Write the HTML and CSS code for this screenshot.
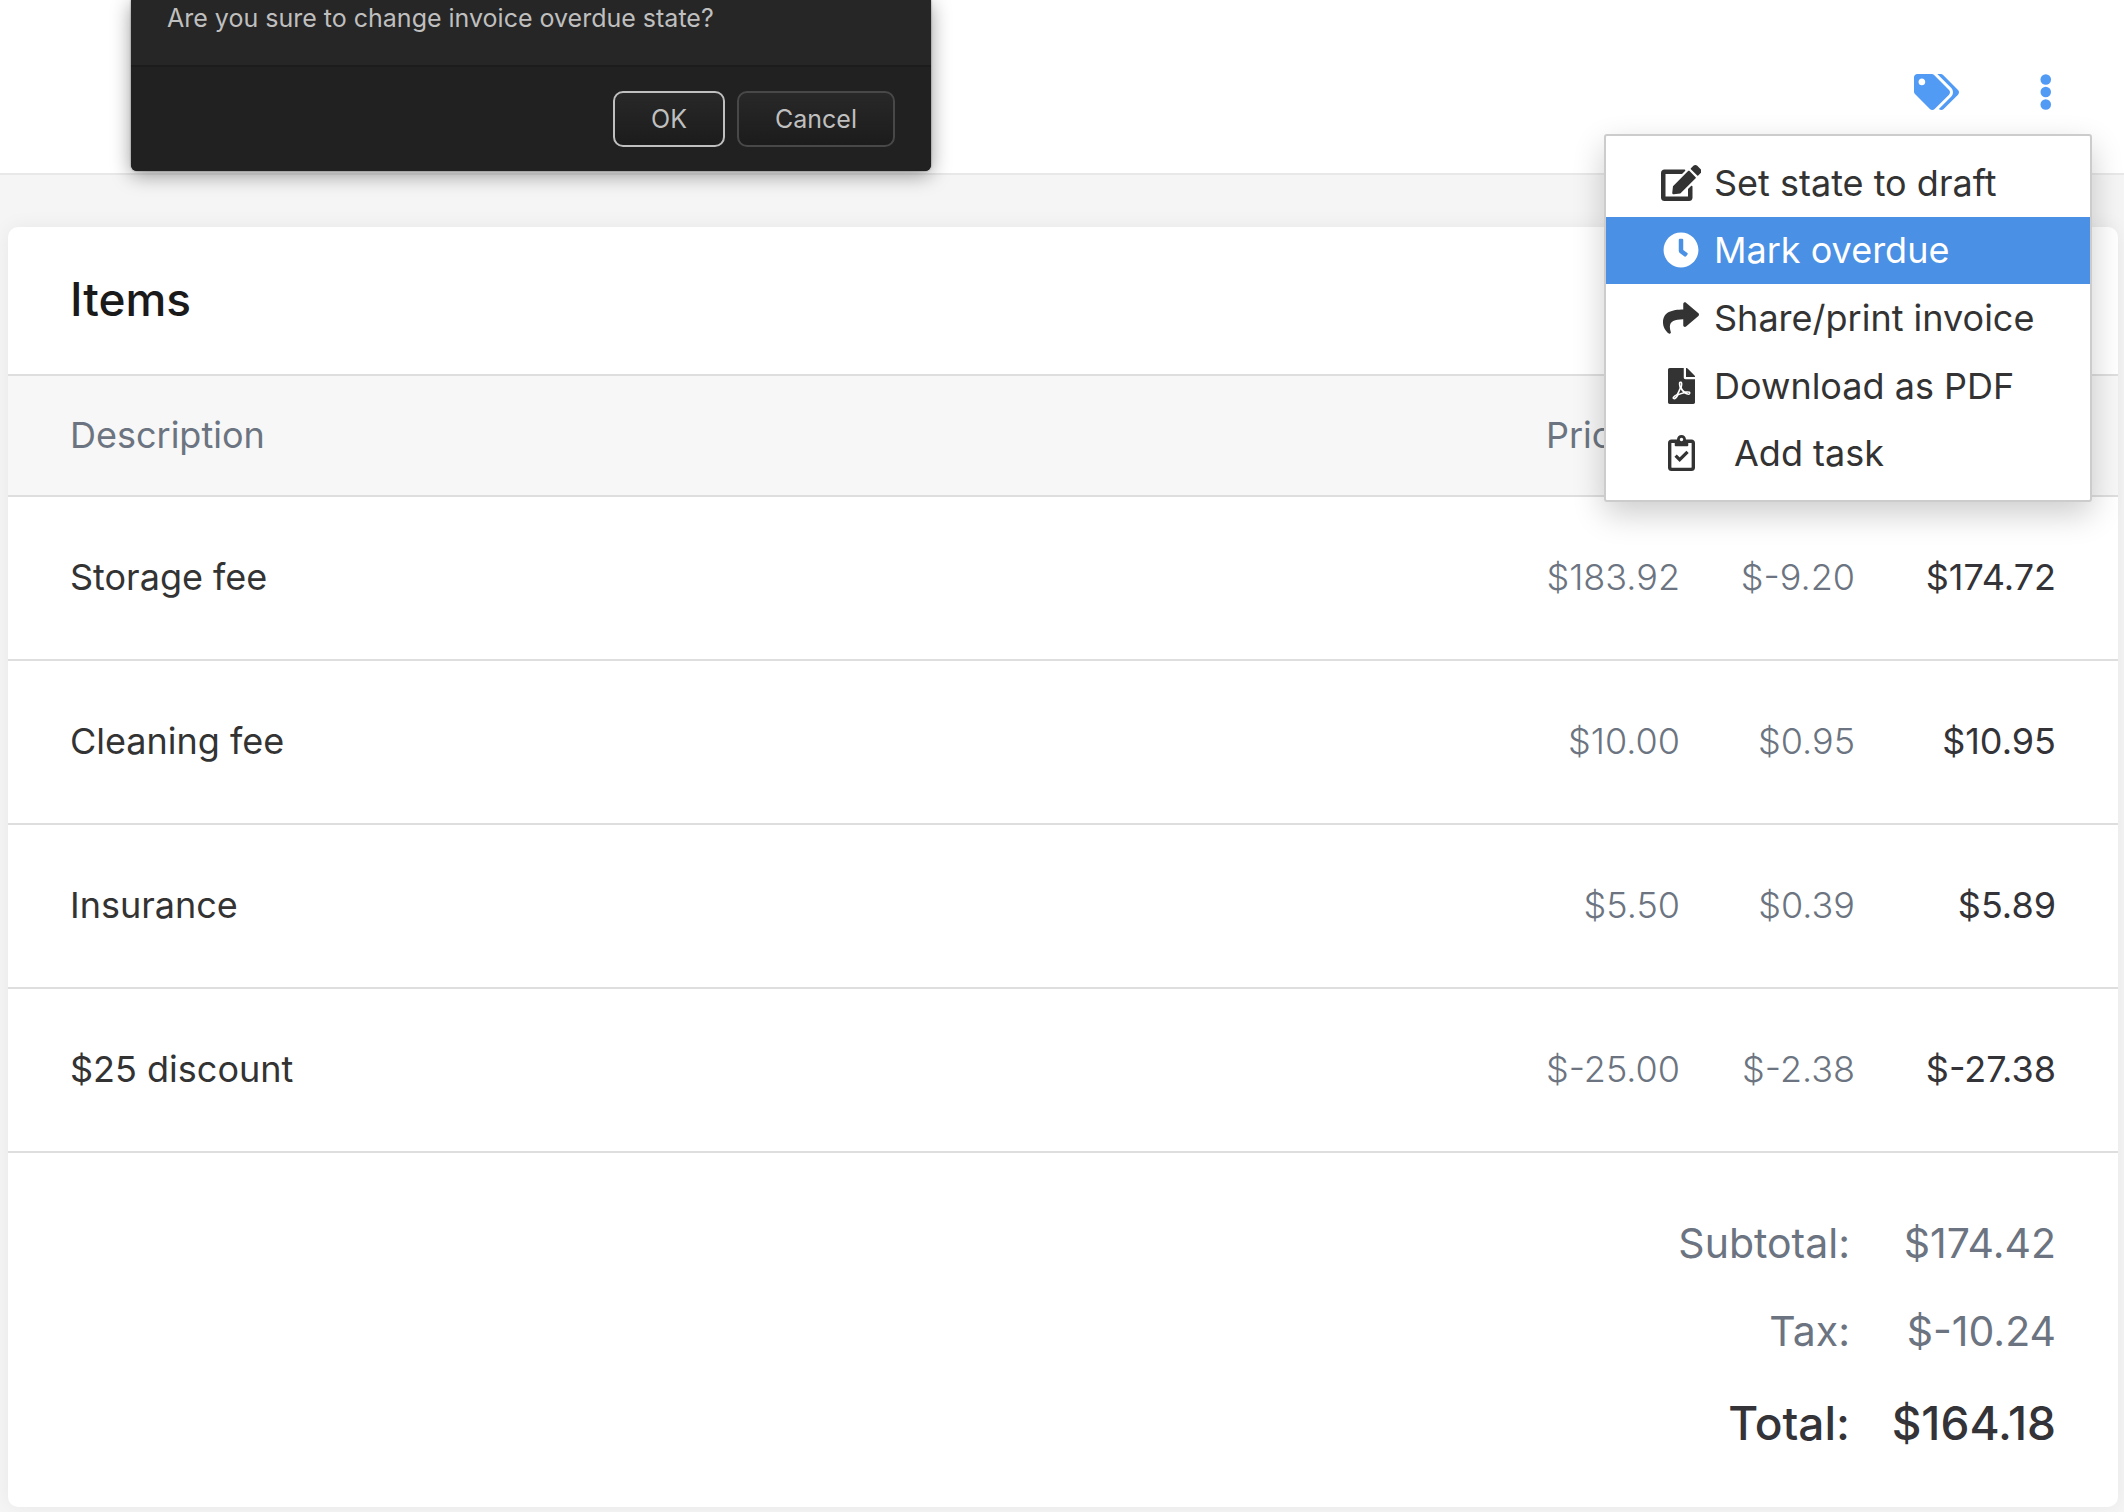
FILE: index.html
```html
<!DOCTYPE html>
<html lang="en">
<head>
  <meta charset="UTF-8">
  <title>Invoice</title>
  <link rel="stylesheet" href="styles.css">
</head>
<body>

<header class="topbar">
  <button class="icon-btn" type="button" aria-label="Tags">
    <svg class="icon" viewBox="0 0 640 512"><path d="M497.941 225.941L286.059 14.059A48 48 0 0 0 252.118 0H48C21.49 0 0 21.49 0 48v204.118a48 48 0 0 0 14.059 33.941l211.882 211.882c18.744 18.745 49.136 18.746 67.882 0l204.118-204.118c18.745-18.745 18.745-49.137 0-67.882zM112 160c-26.51 0-48-21.49-48-48s21.49-48 48-48 48 21.49 48 48-21.49 48-48 48zm513.941 133.823L421.823 497.941c-18.745 18.745-49.137 18.745-67.882 0l-.36-.36L527.64 323.522c16.999-16.999 26.36-39.6 26.36-63.64s-9.362-46.641-26.36-63.64L331.397 0h48.721a48 48 0 0 1 33.941 14.059l211.882 211.882c18.745 18.745 18.745 49.137 0 67.882z"/></svg>
  </button>
  <div class="dropdown">
    <button class="icon-btn" type="button" aria-label="More actions">
      <svg class="icon" viewBox="0 0 192 512"><circle cx="96" cy="78" r="75"/><circle cx="96" cy="256" r="75"/><circle cx="96" cy="434" r="75"/></svg>
    </button>
    <ul class="menu">
      <li><a href="#draft">
        <span class="menu-icon"><svg class="icon" viewBox="0 0 576 512"><path d="M402.6 83.2l90.2 90.2c3.8 3.8 3.8 10 0 13.8L274.4 405.6l-92.8 10.3c-12.4 1.4-22.9-9.1-21.5-21.5l10.3-92.8L388.8 83.2c3.8-3.8 10-3.8 13.8 0zm162-22.9l-48.8-48.8c-15.2-15.2-39.9-15.2-55.2 0l-35.4 35.4c-3.8 3.8-3.8 10 0 13.8l90.2 90.2c3.8 3.8 10 3.8 13.8 0l35.4-35.4c15.2-15.3 15.2-40 0-55.2zM384 346.2V448H64V128h229.8c3.2 0 6.2-1.3 8.5-3.5l40-40c7.6-7.6 2.2-20.5-8.5-20.5H48C21.5 64 0 85.5 0 112v352c0 26.5 21.5 48 48 48h352c26.5 0 48-21.5 48-48V306.2c0-10.7-12.9-16-20.5-8.5l-40 40c-2.2 2.3-3.5 5.3-3.5 8.5z"/></svg></span>
        Set state to draft</a></li>
      <li><a class="active" href="#overdue">
        <span class="menu-icon"><svg class="icon" viewBox="0 0 512 512"><path d="M256,8C119,8,8,119,8,256S119,504,256,504,504,393,504,256,393,8,256,8Zm92.49,313h0l-20,25a16,16,0,0,1-22.49,2.5h0l-67-49.72a40,40,0,0,1-15-31.23V112a16,16,0,0,1,16-16h32a16,16,0,0,1,16,16V256l58,42.5A16,16,0,0,1,348.49,321Z"/></svg></span>
        Mark overdue</a></li>
      <li><a href="#share">
        <span class="menu-icon"><svg class="icon" viewBox="0 0 512 512"><path d="M503.691 189.836L327.687 37.851C312.281 24.546 288 35.347 288 56.015v80.053C127.371 137.907 0 170.1 0 322.326c0 61.441 39.581 122.309 83.333 154.132 13.653 9.931 33.111-2.533 28.077-18.631C66.066 312.814 132.917 274.316 288 272.085V360c0 20.7 24.3 31.453 39.687 18.164l176.004-152c11.071-9.562 11.086-26.753 0-36.328z"/></svg></span>
        Share/print invoice</a></li>
      <li><a href="#pdf">
        <span class="menu-icon"><svg class="icon" viewBox="0 0 384 512"><path d="M181.9 256.1c-5-16-4.9-46.9-2-46.9 8.4 0 7.6 36.9 2 46.9zm-1.7 47.2c-7.7 20.2-17.3 43.3-28.4 62.7 18.3-7 39-17.2 62.9-21.9-12.7-9.6-24.9-23.4-34.5-40.8zM86.1 428.1c0 .8 13.2-5.4 34.9-40.2-6.7 6.3-29.1 24.5-34.9 40.2zM248 160h136v328c0 13.3-10.7 24-24 24H24c-13.3 0-24-10.7-24-24V24C0 10.7 10.7 0 24 0h200v136c0 13.2 10.8 24 24 24zm-8 171.8c-20-12.2-33.3-29-42.7-53.8 4.5-18.5 11.6-46.6 6.2-64.2-4.7-29.4-42.4-26.5-47.8-6.8-5 18.3-.4 44.1 8.1 77-11.6 27.6-28.7 64.6-40.8 85.8-.1 0-.1.1-.2.1-27.1 13.9-73.6 44.5-54.5 68 5.6 6.9 16 10 21.5 10 17.9 0 35.7-18 61.1-61.8 25.8-8.5 54.1-19.1 79-23.2 21.7 11.8 47.1 19.5 64 19.5 29.2 0 31.2-32 19.7-43.4-13.9-13.6-54.3-9.7-73.6-7.2zM377 105L279 7c-4.5-4.5-10.6-7-17-7h-6v128h128v-6.1c0-6.3-2.5-12.4-7-16.9zm-74.1 255.3c4.1-2.7-2.5-11.9-42.8-9 37.1 15.8 42.8 9 42.8 9z"/></svg></span>
        Download as PDF</a></li>
      <li><a class="task" href="#task">
        <span class="menu-icon"><svg class="icon" viewBox="0 0 384 512"><path d="M336 64h-80c0-35.3-28.7-64-64-64s-64 28.7-64 64H48C21.5 64 0 85.5 0 112v352c0 26.5 21.5 48 48 48h288c26.5 0 48-21.5 48-48V112c0-26.5-21.5-48-48-48zM192 40c13.3 0 24 10.7 24 24s-10.7 24-24 24-24-10.7-24-24 10.7-24 24-24zm144 418c0 3.3-2.7 6-6 6H54c-3.3 0-6-2.7-6-6V118c0-3.3 2.7-6 6-6h42v36c0 6.6 5.4 12 12 12h168c6.6 0 12-5.4 12-12v-36h42c3.3 0 6 2.7 6 6z"/><polyline class="check" points="108,292 166,350 278,240"/></svg></span>
        Add task</a></li>
    </ul>
  </div>
</header>

<div class="dialog" role="dialog" aria-labelledby="dialog-text">
  <p class="dialog-text" id="dialog-text">Are you sure to change invoice overdue state?</p>
  <div class="dialog-buttons">
    <button class="ok" type="button">OK</button>
    <button type="button">Cancel</button>
  </div>
</div>

<main class="card">
  <h2>Items</h2>
  <table class="items">
    <thead>
      <tr><th>Description</th><th class="price">Price</th><th class="tax"></th><th class="total"></th></tr>
    </thead>
    <tbody>
      <tr><td>Storage fee</td><td>$183.92</td><td>$-9.20</td><td>$174.72</td></tr>
      <tr><td>Cleaning fee</td><td>$10.00</td><td>$0.95</td><td>$10.95</td></tr>
      <tr><td>Insurance</td><td>$5.50</td><td>$0.39</td><td>$5.89</td></tr>
      <tr><td>$25 discount</td><td>$-25.00</td><td>$-2.38</td><td>$-27.38</td></tr>
    </tbody>
  </table>
  <table class="summary">
    <tr><th>Subtotal:</th><td>$174.42</td></tr>
    <tr><th>Tax:</th><td>$-10.24</td></tr>
    <tr class="grand"><th>Total:</th><td>$164.18</td></tr>
  </table>
</main>

</body>
</html>
```
FILE: styles.css
```css
* { box-sizing: border-box; }
body { margin: 0; background: #f5f5f5; color: #333; font: 36px/48px Inter, sans-serif; }
button { font: inherit; cursor: pointer; }

.icon { display: block; height: 36px; fill: currentColor; }

/* top bar */
.topbar {
  display: flex;
  justify-content: flex-end;
  gap: 60px;
  padding: 64px 62px 53px;
  background: #fff;
  border-bottom: 2px solid #e8e8e8;
}
.icon-btn {
  display: block;
  padding: 10px;
  border: 0;
  background: none;
  color: #529bf5;
}
.dropdown { position: relative; }

.menu {
  position: absolute;
  top: 70px;
  right: -30px;
  z-index: 2;
  width: 488px;
  height: 368px;
  display: grid;
  grid-auto-rows: 1fr;
  margin: 0;
  padding: 13px 0;
  list-style: none;
  background: #fff;
  border: 2px solid #ccc;
  border-radius: 3px;
  box-shadow: 0 12px 32px rgba(0,0,0,0.2);
}
.menu a {
  display: flex;
  align-items: center;
  gap: 10px;
  height: 100%;
  padding-left: 52px;
  color: #333;
  text-decoration: none;
  white-space: nowrap;
}
.menu a.active { background: #4a90e5; color: #fff; }
.menu a.task { gap: 30px; }
.menu-icon { display: flex; justify-content: center; width: 46px; }
.check { fill: none; stroke: currentColor; stroke-width: 46; }

/* confirm dialog, hangs from the top edge */
.dialog {
  position: absolute;
  top: 0;
  left: 131px;
  width: 800px;
  background: #262626;
  border-radius: 0 0 6px 6px;
  box-shadow: 0 4px 20px rgba(0,0,0,0.4), 0 0 2px rgba(0,0,0,0.5);
  color: #bfbfbf;
  font: 25px/36px Inter, sans-serif;
  overflow: hidden;
}
.dialog-text { margin: 0; padding: 0 36px 29px; }
.dialog-buttons {
  display: flex;
  justify-content: flex-end;
  gap: 12px;
  padding: 24px 36px;
  background: #212121;
  border-top: 2px solid #1c1c1c;
}
.dialog-buttons button {
  padding: 8px 36px;
  background: linear-gradient(#282828, #1c1c1c);
  border: 2px solid #484848;
  border-radius: 10px;
  color: #bfbfbf;
}
.dialog-buttons .ok { border-color: #bfbfbf; }

/* invoice */
.card {
  margin: 52px 6px 6px 8px;
  background: #fff;
  border-radius: 10px;
  box-shadow: 0 0 20px rgba(0,0,0,0.06);
}
h2 { margin: 0; padding: 42px 62px 45px; color: #1a1a1a; font-size: 46px; line-height: 60px; font-weight: 500; }

table { border-collapse: collapse; }
.items { width: 100%; }
.items th, .items td { padding: 0 0 2px 62px; border-top: 2px solid #dedede; text-align: left; }
.items th { height: 121px; background: #f7f7f7; color: #6b7480; font-weight: 400; }
.items td { height: 164px; }
.items tbody tr:last-child td { border-bottom: 2px solid #dedede; }
.items th.price { width: 133px; padding-left: 0; }
.items th.tax { width: 175px; }
.items th.total { width: 263px; }
.items td + td { padding-left: 0; color: #6b7480; text-align: right; font-weight: 300; }
.items td:last-child { padding-right: 62px; color: #333338; font-weight: 400; }

.summary { margin-left: auto; color: #6b7480; font-size: 41px; line-height: 88px; }
.summary th { padding: 0; font-weight: 400; text-align: right; }
.summary td { width: 268px; padding: 0 62px 0 0; text-align: right; }
.summary tr:first-child > * { padding-top: 46px; }
.grand { color: #333338; font-size: 46px; line-height: 96px; }
.summary .grand > * { padding-bottom: 36px; font-weight: 500; }
```
